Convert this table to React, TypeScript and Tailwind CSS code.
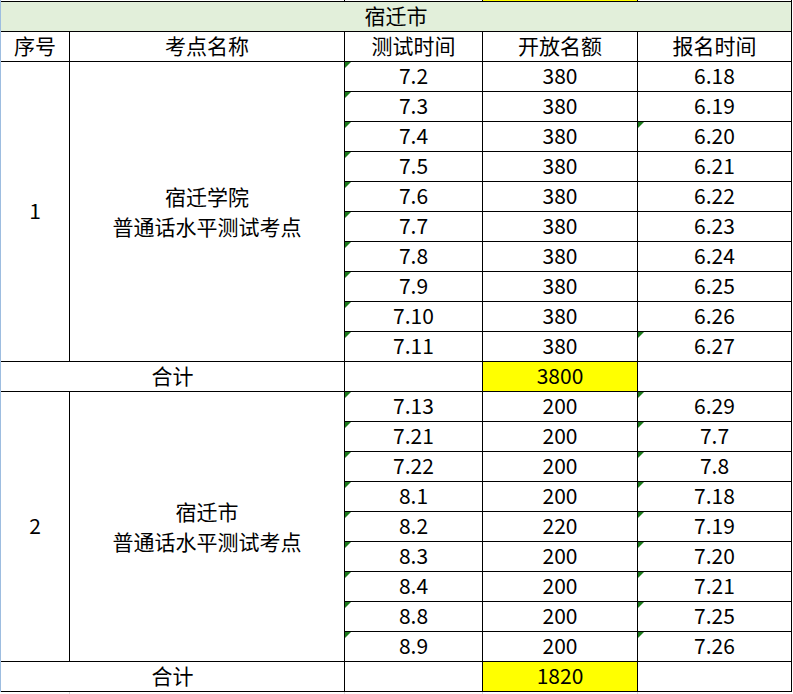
import React from "react";

type Row = { t: string; n: string; r: string; tri: boolean };

const g1: Row[] = [
  { t: "7.2", n: "380", r: "6.18", tri: false },
  { t: "7.3", n: "380", r: "6.19", tri: false },
  { t: "7.4", n: "380", r: "6.20", tri: true },
  { t: "7.5", n: "380", r: "6.21", tri: false },
  { t: "7.6", n: "380", r: "6.22", tri: false },
  { t: "7.7", n: "380", r: "6.23", tri: false },
  { t: "7.8", n: "380", r: "6.24", tri: false },
  { t: "7.9", n: "380", r: "6.25", tri: false },
  { t: "7.10", n: "380", r: "6.26", tri: false },
  { t: "7.11", n: "380", r: "6.27", tri: true },
];

const g2: Row[] = [
  { t: "7.13", n: "200", r: "6.29", tri: true },
  { t: "7.21", n: "200", r: "7.7", tri: true },
  { t: "7.22", n: "200", r: "7.8", tri: true },
  { t: "8.1", n: "200", r: "7.18", tri: true },
  { t: "8.2", n: "220", r: "7.19", tri: true },
  { t: "8.3", n: "200", r: "7.20", tri: true },
  { t: "8.4", n: "200", r: "7.21", tri: true },
  { t: "8.8", n: "200", r: "7.25", tri: true },
  { t: "8.9", n: "200", r: "7.26", tri: true },
];

function Tri() {
  return (
    <svg className="absolute left-0 top-0" width="6" height="6" viewBox="0 0 6 6">
      <polygon points="0,0 6,0 0,6" fill="#1b7a1b" />
    </svg>
  );
}

const cell = "bg-white flex items-center justify-center leading-none pb-[2px]";

function Group({ no, name, rows, total, span }: { no: string; name: string; rows: Row[]; total: string; span: string }) {
  return (
    <>
      <div className={`${cell} ${span}`}>{no}</div>
      <div className={`${span} bg-white flex flex-col items-center justify-center leading-[30px] pb-[2px]`}>
        <div>{name}</div>
        <div>普通话水平测试考点</div>
      </div>
      {rows.map((r, i) => (
        <React.Fragment key={i}>
          <div className={`${cell} relative`}>
            <Tri />
            {r.t}
          </div>
          <div className={cell}>{r.n}</div>
          <div className={`${cell} relative`}>
            {r.tri && <Tri />}
            {r.r}
          </div>
        </React.Fragment>
      ))}
      <div className={`${cell} col-span-2`}>合计</div>
      <div className="bg-white" />
      <div className={`${cell} !bg-[#ffff00]`}>{total}</div>
      <div className="bg-white" />
    </>
  );
}

export default function App() {
  return (
    <div
      className="w-[793px] h-[694px] bg-white text-black text-[21px] overflow-hidden"
      style={{ fontFamily: '"Noto Sans CJK SC", "Noto Sans", sans-serif' }}
    >
      {/* sliver of previous row */}
      <div className="flex h-px border-l border-l-[#9dbde0]">
        <div className="w-[343px] bg-white" />
        <div className="w-px bg-black" />
        <div className="w-[137px] bg-white" />
        <div className="w-px bg-black" />
        <div className="w-[154px] bg-[#ffff00]" />
        <div className="w-px bg-black" />
        <div className="w-[153px] bg-white" />
        <div className="w-px bg-black" />
      </div>
      <div className="w-[792px] bg-black border-l border-l-[#9dbde0] pt-px pr-px pb-px grid grid-cols-[68px_274px_137px_154px_153px] auto-rows-[29px] gap-px">
        <div className={`${cell} col-span-5 !bg-[#e2efda]`}>宿迁市</div>
        <div className={cell}>序号</div>
        <div className={cell}>考点名称</div>
        <div className={cell}>测试时间</div>
        <div className={cell}>开放名额</div>
        <div className={cell}>报名时间</div>
        <Group no="1" name="宿迁学院" rows={g1} total="3800" span="row-span-10" />
        <Group no="2" name="宿迁市" rows={g2} total="1820" span="row-span-9" />
      </div>
      <div className="flex h-[2px]">
        <div className="w-[69px]" />
        <div className="w-px bg-[#d9d9d9]" />
        <div className="w-[274px]" />
        <div className="w-px bg-[#d9d9d9]" />
        <div className="w-[137px]" />
        <div className="w-px bg-[#d9d9d9]" />
        <div className="w-[154px]" />
        <div className="w-px bg-[#d9d9d9]" />
      </div>
    </div>
  );
}
